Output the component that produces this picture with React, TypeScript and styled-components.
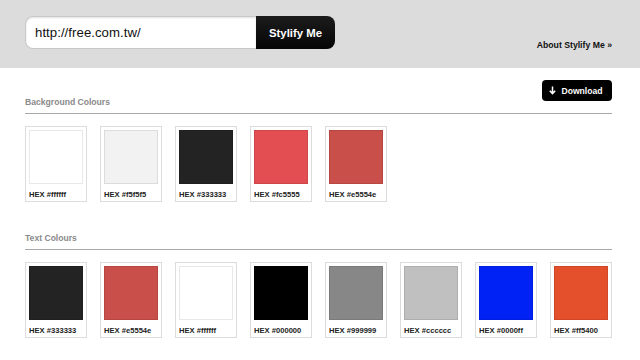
import React from 'react';
import styled, { createGlobalStyle } from 'styled-components';

interface Swatch {
	hex: string;
	shown: string;
}

const backgroundColours: Swatch[] = [
	{ hex: '#ffffff', shown: '#ffffff' },
	{ hex: '#f5f5f5', shown: '#f2f2f2' },
	{ hex: '#333333', shown: '#232323' },
	{ hex: '#fc5555', shown: '#e24e52' },
	{ hex: '#e5554e', shown: '#c84f4a' },
];

const textColours: Swatch[] = [
	{ hex: '#333333', shown: '#232323' },
	{ hex: '#e5554e', shown: '#c84f4a' },
	{ hex: '#ffffff', shown: '#ffffff' },
	{ hex: '#000000', shown: '#000000' },
	{ hex: '#999999', shown: '#878787' },
	{ hex: '#cccccc', shown: '#c0c0c0' },
	{ hex: '#0000ff', shown: '#0022f5' },
	{ hex: '#ff5400', shown: '#e44f2c' },
];

const GlobalStyle = createGlobalStyle`
	html, body {
		margin: 0;
		padding: 0;
		background: #ffffff;
		font-family: "Liberation Sans", Arial, sans-serif;
	}
`;

const Page = styled.div`
	width: 640px;
	height: 360px;
	overflow: hidden;
`;

const Header = styled.header`
	height: 68px;
	box-sizing: border-box;
	background: #dcdcdc;
	padding: 16px 28px 0 25px;
	display: flex;
	justify-content: space-between;
	align-items: flex-start;
`;

const SearchForm = styled.form`
	display: flex;
	margin: 0;
`;

const UrlInput = styled.div`
	width: 231px;
	height: 33px;
	box-sizing: border-box;
	background: #ffffff;
	border: 1px solid #c8c8c8;
	border-right: none;
	border-radius: 8px 0 0 8px;
	box-shadow: inset 0 1px 2px rgba(0, 0, 0, 0.12);
	padding: 0 0 0 9px;
	display: flex;
	align-items: center;
	font-size: 13.2px;
	letter-spacing: 0.05px;
	color: #111111;
`;

const SubmitButton = styled.div`
	width: 79px;
	height: 33px;
	box-sizing: border-box;
	background: linear-gradient(#1c1c1c, #050505);
	border-radius: 0 8px 8px 0;
	display: flex;
	align-items: center;
	justify-content: center;
	color: #ffffff;
	font-weight: bold;
	font-size: 11.4px;
`;

const AboutLink = styled.a`
	margin-top: 23px;
	font-size: 8.7px;
	font-weight: bold;
	color: #111111;
	text-decoration: none;
	line-height: 12px;
`;

const Main = styled.main`
	padding: 12px 28px 0 25px;
`;

const Section = styled.section<{ $gap: number }>`
	margin-top: ${(p) => p.$gap}px;
`;

const SectionHead = styled.div`
	display: flex;
	justify-content: space-between;
	align-items: flex-end;
	border-bottom: 1px solid #a8a8a8;
	min-height: 17px;
`;

const Heading = styled.h2`
	margin: 0;
	padding-bottom: 5px;
	font-size: 8.6px;
	line-height: 12px;
	font-weight: bold;
	color: #8a8a8a;
`;

const DownloadButton = styled.div`
	height: 21px;
	width: 70px;
	box-sizing: border-box;
	margin-bottom: 12px;
	background: #000000;
	border-radius: 4px;
	display: flex;
	align-items: center;
	justify-content: center;
	gap: 5px;
	color: #ffffff;
	font-size: 8.6px;
	font-weight: bold;
	padding-right: 2px;
`;

const SwatchRow = styled.div`
	display: flex;
	gap: 13px;
	margin-top: 12px;
`;

const Card = styled.div`
	width: 62px;
	height: 76px;
	box-sizing: border-box;
	border: 1px solid #dcdcdc;
	padding: 3px;
	background: #ffffff;
`;

const Colour = styled.div<{ $fill: string }>`
	width: 54px;
	height: 54px;
	box-sizing: border-box;
	background: ${(p) => p.$fill};
	border: 1px solid rgba(0, 0, 0, 0.09);
`;

const Label = styled.div`
	margin-top: 4px;
	height: 13px;
	line-height: 13px;
	font-size: 7.6px;
	font-weight: bold;
	color: #222222;
	white-space: nowrap;
`;

const SwatchList: React.FC<{ items: Swatch[] }> = ({ items }) => (
	<SwatchRow>
		{items.map((s, i) => (
			<Card key={i}>
				<Colour $fill={s.shown} />
				<Label>HEX {s.hex}</Label>
			</Card>
		))}
	</SwatchRow>
);

const DownArrow = () => (
	<svg width="7" height="9" viewBox="0 0 7 9">
		<path d="M3.5 0.5 V7.5 M0.8 4.8 L3.5 7.6 L6.2 4.8" stroke="#fff" strokeWidth="1.5" fill="none" />
	</svg>
);

export default function App(): JSX.Element {
	return (
		<Page>
			<GlobalStyle />
			<Header>
				<SearchForm>
					<UrlInput>http://free.com.tw/</UrlInput>
					<SubmitButton>Stylify Me</SubmitButton>
				</SearchForm>
				<AboutLink href="#">About Stylify Me »</AboutLink>
			</Header>
			<Main>
				<Section $gap={0}>
					<SectionHead>
						<Heading>Background Colours</Heading>
						<DownloadButton>
							<DownArrow />
							Download
						</DownloadButton>
					</SectionHead>
					<SwatchList items={backgroundColours} />
				</Section>
				<Section $gap={30}>
					<SectionHead>
						<Heading>Text Colours</Heading>
					</SectionHead>
					<SwatchList items={textColours} />
				</Section>
			</Main>
		</Page>
	);
}
